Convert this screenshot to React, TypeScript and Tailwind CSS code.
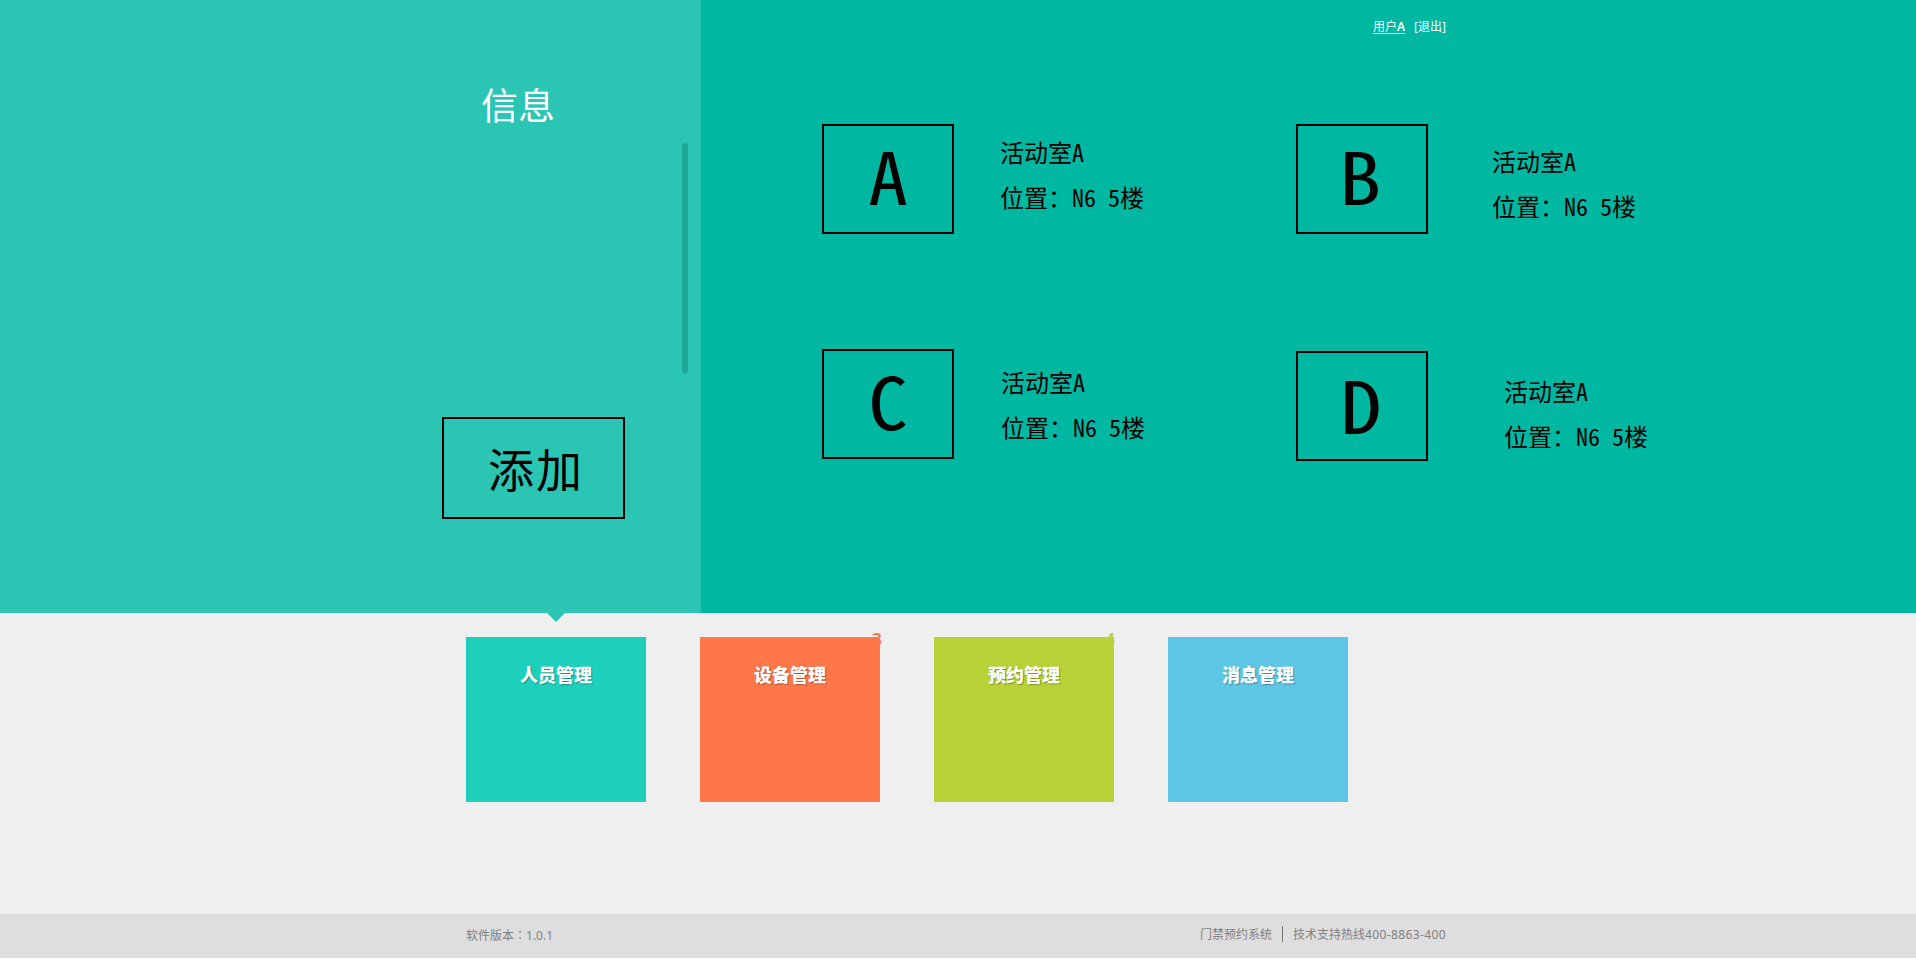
import React from "react";

const hei = "font-['Noto_Sans_Mono_CJK_SC','Noto_Sans_CJK_SC',monospace]";

type Room = { letter: string; box: string; glyph: string; info: string };

const rooms: Room[] = [
  { letter: "A", box: "pb-[10px]", glyph: "scale-x-110", info: "ml-[46px] mt-[5px]" },
  { letter: "B", box: "pb-[10px] pr-[4px]", glyph: "scale-x-118", info: "ml-[64px] mt-[14px]" },
  { letter: "C", box: "pb-[10px]", glyph: "scale-x-110", info: "ml-[47px] mt-[10px]" },
  { letter: "D", box: "mt-[2px] pr-[2px] pb-[7px]", glyph: "scale-x-115", info: "ml-[76px] mt-[19px]" },
];

function RoomCard({ room }: { room: Room }) {
  return (
    <div className={`flex h-[225px] items-start text-black ${hei}`}>
      <div className={`flex h-[110px] w-[132px] shrink-0 items-center justify-center border-2 border-black ${room.box}`}>
        <span className={`text-[72px] leading-none font-medium ${room.glyph}`}>{room.letter}</span>
      </div>
      <div className={`text-2xl leading-[45px] whitespace-pre ${room.info}`}>
        <p>活动室A</p>
        <p>位置：N6 5楼</p>
      </div>
    </div>
  );
}

const tiles = [
  { title: "人员管理", bg: "bg-[#1dd0bc]", count: "", ink: "" },
  { title: "设备管理", bg: "bg-[#ff7648]", count: "3", ink: "text-[#f07850] -right-[2px]" },
  { title: "预约管理", bg: "bg-[#b7d137]", count: "4", ink: "text-[#b9cf4c] -right-px" },
  { title: "消息管理", bg: "bg-[#5dc6e4]", count: "", ink: "" },
];

export default function App() {
  return (
    <div className="flex h-[959px] w-[1916px] flex-col overflow-hidden bg-white font-['Noto_Sans','Noto_Sans_CJK_SC',sans-serif]">
      <section className="flex h-[613px] shrink-0 bg-[#00b8a2]">
        <aside className="relative w-[701px] shrink-0 bg-[#2ac5b3] pl-[442px]">
          <h1 className="pt-[78px] pl-[39px] font-['Noto_Sans_CJK_SC',sans-serif] text-[37px] leading-[52px] text-white">信息</h1>
          <div className="mt-[13px] ml-[240px] h-[231px] w-[6px] rounded-full bg-[#1fa898]" />
          <button className={`mt-[43px] flex h-[102px] w-[183px] items-center border-2 border-black pb-[2px] pl-[44px] text-[46px] leading-none tracking-[2px] text-black ${hei}`}>
            添加
          </button>
          <svg className="absolute top-[612px] left-[546px] h-[10px] w-[20px]" viewBox="0 0 20 10">
            <path d="M0 0h20L10 10z" fill="#2ac5b3" />
          </svg>
        </aside>
        <div className="flex-1">
          <div className="flex h-[124px] w-[745px] justify-end gap-[9px] pt-[18px] text-xs leading-[18px] text-white">
            <a className="h-[17px] underline underline-offset-2">用户<b className="font-semibold">A</b></a>
            <a>[退出]</a>
          </div>
          <div className="grid grid-cols-[474px_1fr] pl-[121px]">
            {rooms.map((r) => (
              <RoomCard key={r.letter} room={r} />
            ))}
          </div>
        </div>
      </section>

      <main className="flex h-[301px] shrink-0 gap-[54px] bg-[#efefef] pt-[24px] pl-[466px]">
        {tiles.map((t) => (
          <div key={t.title} className="relative isolate h-[165px] w-[180px]">
            {t.count && <span className={`absolute -top-[10px] text-lg leading-6 font-semibold ${t.ink}`}>{t.count}</span>}
            <div className={`relative h-full pt-[23px] text-center font-['Noto_Sans_CJK_SC',sans-serif] text-lg leading-7 font-black text-white [text-shadow:1px_1px_1px_rgba(0,0,0,0.3)] ${t.bg}`}>
              {t.title}
            </div>
          </div>
        ))}
      </main>

      <footer className="flex h-[44px] shrink-0 items-start bg-[#dedede] pt-[12px] pr-[470px] pl-[466px] text-xs leading-[18px] text-[#808080]">
        <span>软件版本<span className="font-['Noto_Sans_CJK_TC',sans-serif]" lang="zh-TW">：</span>1.0.1</span>
        <span className="ml-auto">门禁预约系统</span>
        <span className="mx-[10px] h-[16px] w-px bg-[#777]" />
        <span>技术支持热线<span className="tracking-[0.38px]">400-8863-400</span></span>
      </footer>
    </div>
  );
}
